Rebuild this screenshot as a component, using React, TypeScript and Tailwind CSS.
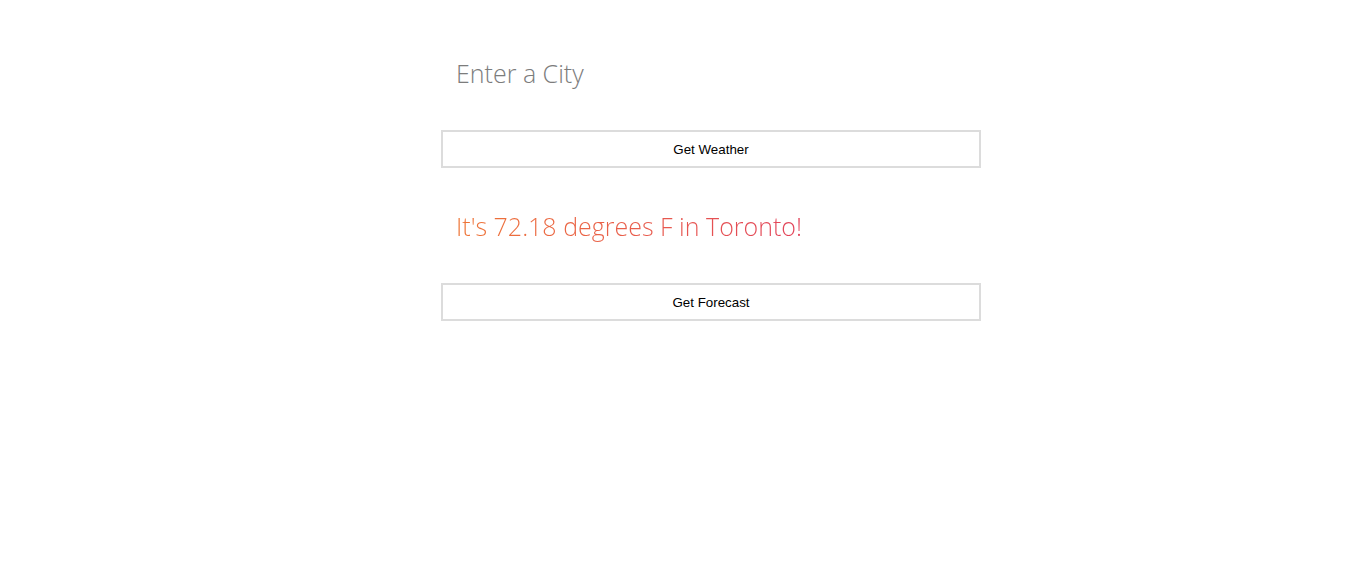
import React from "react";

export default function App() {
  return (
    <div className="min-h-[587px] w-full bg-white">
      <div className="ml-[441px] flex w-[540px] flex-col pt-[55px]">
        <input
          type="text"
          placeholder="Enter a City"
          className="block h-[36px] w-full border-0 bg-white pl-[15px] font-['Open_Sans',sans-serif] text-[25px] font-light leading-[36px] text-[#7c7c7c] outline-none placeholder:text-[#7c7c7c]"
        />
        <button className="mt-[39px] block h-[38px] w-full border-2 border-[#dcdcdc] bg-white pt-[1px] font-['Liberation_Sans',Arial,sans-serif] text-[13.33px] text-black">
          Get Weather
        </button>
        <div className="mt-[40px] h-[36px] pl-[15px]">
          <span className="inline-block bg-gradient-to-r from-[#ee7434] to-[#e2435a] bg-clip-text font-['Open_Sans',sans-serif] text-[25px] font-light leading-[36px] text-transparent">
            It's 72.18 degrees F in Toronto!
          </span>
        </div>
        <button className="mt-[39px] block h-[38px] w-full border-2 border-[#dcdcdc] bg-white pt-[1px] font-['Liberation_Sans',Arial,sans-serif] text-[13.33px] text-black">
          Get Forecast
        </button>
      </div>
    </div>
  );
}
